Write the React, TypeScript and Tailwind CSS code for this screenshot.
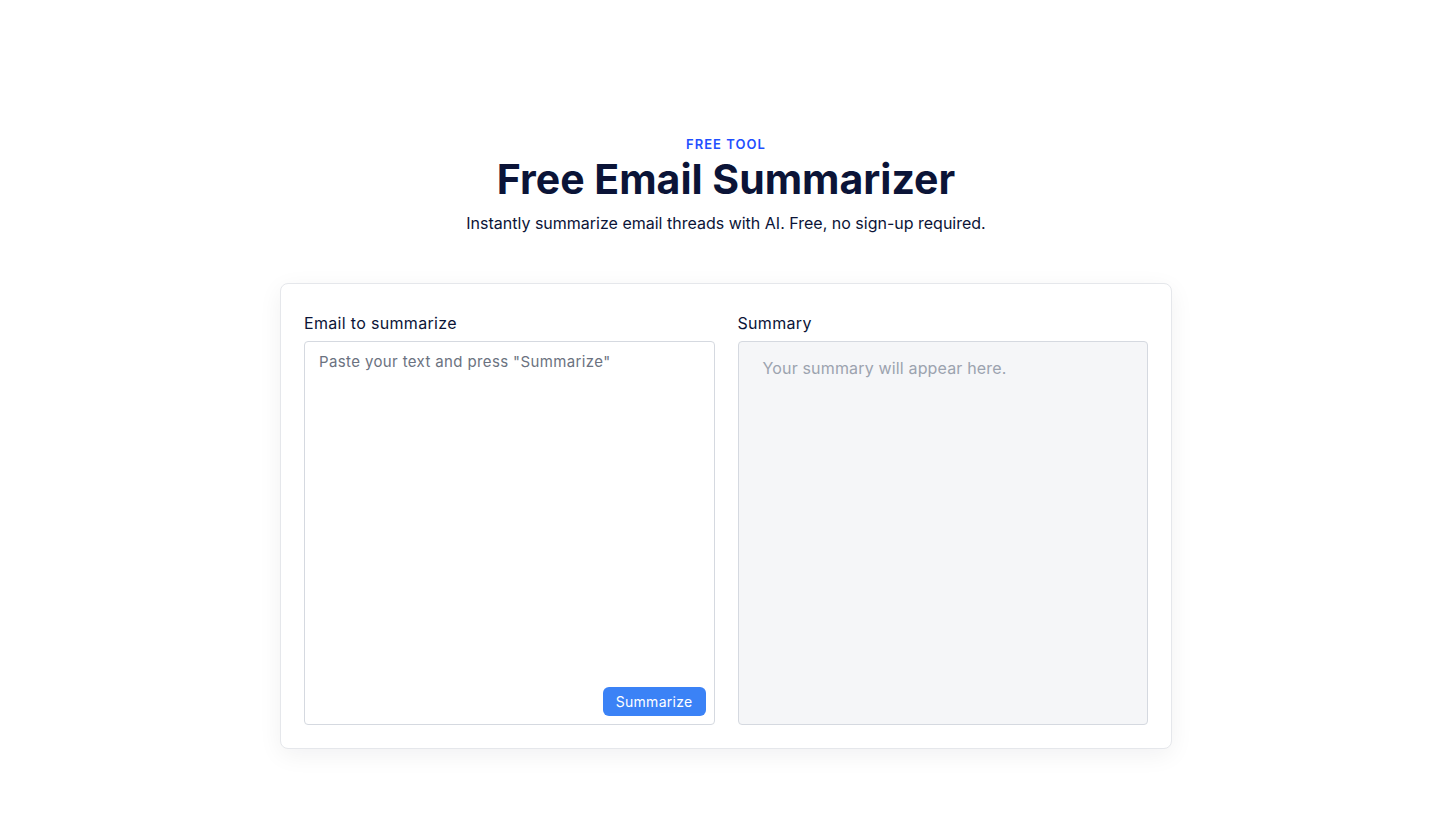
import { useState } from 'react';

export default function App() {
  const [text, setText] = useState('');

  return (
    <div className="min-h-screen bg-white font-['Inter',_'Open_Sans',_sans-serif] text-[#0b1437]">
      <div className="mx-auto flex max-w-[892px] flex-col items-center pt-[135px]">
        <p className="text-[13px] font-semibold leading-[18px] tracking-[0.08em] text-[#1f4fff]">FREE TOOL</p>
        <h1 className="mt-[4px] text-[41px] font-bold leading-[44px]">Free Email Summarizer</h1>
        <p className="mt-[10px] text-[16px] leading-[24px]">Instantly summarize email threads with AI. Free, no sign-up required.</p>

        <div className="mt-[48px] grid w-full grid-cols-2 gap-[23px] rounded-lg border border-[#e5e7eb] bg-white p-[23px] shadow-[0_6px_24px_rgba(15,23,42,0.06)]">
          <div className="flex flex-col">
            <label className="mb-[2px] text-[16px] leading-[32px] tracking-[0.02em]">Email to summarize</label>
            <div className="relative h-[384px]">
              <textarea
                className="h-full w-full resize-none rounded-[4px] border border-[#d5d9e0] px-[14px] py-[9px] text-[15px] tracking-[0.025em] text-[#0b1437] outline-none placeholder:text-[#6b7280]"
                onChange={(event) => setText(event.target.value)}
                placeholder={'Paste your text and press "Summarize"'}
                value={text}
              />
              <button
                className="absolute bottom-[9px] right-[9px] rounded-md bg-[#3b82f6] px-[13px] py-[4px] text-[14px] leading-[21px] tracking-[0.02em] text-white"
                type="button"
              >
                Summarize
              </button>
            </div>
          </div>
          <div className="flex flex-col">
            <label className="mb-[2px] text-[16px] leading-[32px] tracking-[0.02em]">Summary</label>
            <div className="h-[384px] rounded-[4px] border border-[#d5d9e0] bg-[#f5f6f8] px-[24px] py-[14px] text-[16px] leading-[24px] tracking-[0.01em] text-[#9ca3af]">
              Your summary will appear here.
            </div>
          </div>
        </div>
      </div>
    </div>
  );
}
